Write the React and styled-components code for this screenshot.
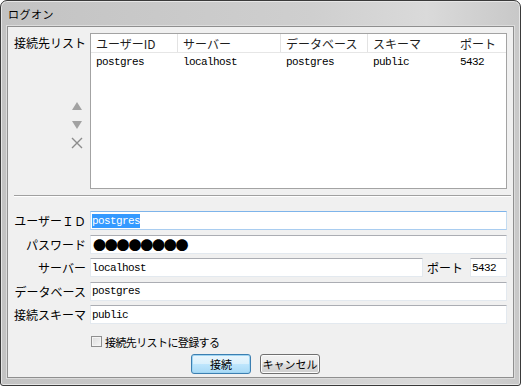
import React from "react";
import styled, { createGlobalStyle } from "styled-components";

const Global = createGlobalStyle`
    body {
        margin : 0;
        background : #ffffff;
        font-family : "Noto Sans CJK JP", sans-serif;
        font-size : 12px;
        color : #000;
    }
`

const Window = styled.div`
    width : 521px;
    height : 386px;
    box-sizing : border-box;
    border : 1px solid #3a3a3a;
    border-radius : 7px 7px 3px 3px;
    background : linear-gradient(90deg, #c3c3c3 0%, #cfcfcf 60%, #dadada 82%, #c8c8c8 100%);
    display : flex;
    flex-direction : column;
    box-shadow : inset 0 0 0 1px #e6e6e6;
`

const TitleBar = styled.div`
    height : 25px;
    flex : none;
    display : flex;
    align-items : center;
    padding-left : 7px;
    font-size : 11px;
    letter-spacing : 0.5px;
`

const Frame = styled.div`
    flex : 1;
    padding : 0 6px 7px 6px;
    display : flex;
`

const Client = styled.div`
    flex : 1;
    border : 1px solid #8f8f8f;
    outline : 1px solid #dcdcdc;
    background : #f0f0f0;
    display : flex;
    flex-direction : column;
    padding-top : 6px;
`

const ListSection = styled.div`
    display : flex;
    height : 156px;
    padding : 0 6px;
`

const SideColumn = styled.div`
    width : 76px;
    flex : none;
    display : flex;
    flex-direction : column;
    align-items : flex-start;
`

const SideLabel = styled.div`
    padding-top : 2px;
    line-height : 16px;
`

const SideButtons = styled.div`
    align-self : flex-end;
    margin : 46px 3px 0 0;
    display : flex;
    flex-direction : column;
    align-items : center;
    width : 20px;
`

const SideButton = styled.div`
    height : 18.5px;
    display : flex;
    align-items : center;
    justify-content : center;
`

const Table = styled.div`
    flex : 1;
    border : 1px solid #a3a3a3;
    background : #fff;
`

const Row = styled.div`
    display : flex;
    height : 18px;
    border-bottom : ${props => props.header ? "1px solid #e6e6e6" : "none"};
`

const Cell = styled.div`
    width : ${props => props.w ? props.w + "px" : "auto"};
    flex : ${props => props.w ? "none" : "1"};
    padding-left : 5px;
    box-sizing : border-box;
    display : flex;
    align-items : center;
    border-right : ${props => props.header && props.divider ? "1px solid #e3e3e3" : "none"};
    color : ${props => props.header ? "#1e1e1e" : "#000"};
`

const Mono = styled.span`
    font-family : "Liberation Mono", "DejaVu Sans Mono", monospace;
    font-size : 11px;
    letter-spacing : -0.6px;
`

const Separator = styled.div`
    margin : 6px 2px 0 6px;
    border-top : 1px solid #a0a0a0;
    border-bottom : 1px solid #ffffff;
`

const Form = styled.div`
    margin-top : 14px;
    padding : 0 6px;
    display : flex;
    flex-direction : column;
    gap : 4.5px;
`

const FormRow = styled.div`
    display : flex;
    align-items : center;
    height : 19px;
`

const Label = styled.div`
    width : 72px;
    margin-right : 4px;
    text-align : right;
    flex : none;
    white-space : nowrap;
`

const Input = styled.div`
    flex : ${props => props.w ? "none" : "1"};
    width : ${props => props.w ? props.w + "px" : "auto"};
    height : 19px;
    box-sizing : border-box;
    background : #fff;
    border : 1px solid ${props => props.focus ? "#c5dcf0" : "#e3e9ef"};
    border-top-color : ${props => props.focus ? "#7eb4ea" : "#abadb3"};
    border-bottom-color : ${props => props.focus ? "#a9cdf0" : "#e3e9ef"};
    padding-left : 1px;
    display : flex;
    align-items : center;
    overflow : hidden;
    white-space : nowrap;
`

const Selected = styled.span`
    background : #3399ff;
    color : #fff;
    padding : 1px 0;
`

const Dots = styled.span`
    font-size : 13px;
    letter-spacing : -1.2px;
    margin-left : 1px;
`

const PortLabel = styled.div`
    margin : 0 7px 0 4px;
    white-space : nowrap;
`

const CheckRow = styled.label`
    margin : 11px 0 0 83px;
    display : flex;
    align-items : center;
    gap : 3px;
    font-size : 11px;
    letter-spacing : -0.6px;
    height : 13px;
`

const CheckBox = styled.span`
    width : 11px;
    height : 11px;
    box-sizing : border-box;
    border : 1px solid #8f8f8f;
    background : linear-gradient(135deg, #dcdcdc, #f6f6f6);
    box-shadow : inset 0 0 0 1px #f4f4f4;
`

const ButtonRow = styled.div`
    margin : 6px 0 0 183px;
    display : flex;
    gap : 9px;
`

const Button = styled.button`
    width : ${props => props.w}px;
    height : 20px;
    box-sizing : border-box;
    font-family : "Noto Sans CJK JP", sans-serif;
    font-size : 11px;
    color : #000;
    padding : 0;
    border-radius : 3px;
    border : 1px solid ${props => props.primary ? "#3c7fb1" : "#707070"};
    background : ${props => props.primary
        ? "linear-gradient(#eaf6fd 0%, #d9f0fc 50%, #bee6fd 51%, #a7d9f5 100%)"
        : "linear-gradient(#f2f2f2 0%, #ebebeb 50%, #dddddd 51%, #cfcfcf 100%)"};
    box-shadow : inset 0 0 0 1px ${props => props.primary ? "#9fd5f3" : "#fcfcfc"};
`

const columns = [
    { title : "ユーザーID", w : 87, value : "postgres" },
    { title : "サーバー", w : 103, value : "localhost" },
    { title : "データベース", w : 87, value : "postgres" },
    { title : "スキーマ", w : 87, value : "public" },
    { title : "ポート", value : "5432" },
]

const Up = () => (
    <svg width="10" height="8" viewBox="0 0 10 8"><polygon points="5,0 10,8 0,8" fill="#a2a2a2" /></svg>
)
const Down = () => (
    <svg width="10" height="8" viewBox="0 0 10 8"><polygon points="0,0 10,0 5,8" fill="#a2a2a2" /></svg>
)
const Cross = () => (
    <svg width="12" height="12" viewBox="0 0 12 12">
        <path d="M1 1 L11 11 M11 1 L1 11" stroke="#8c8c8c" strokeWidth="1.4" fill="none" />
    </svg>
)

const App = () => {
    return (
        <>
            <Global />
            <Window>
                <TitleBar>ログオン</TitleBar>
                <Frame>
                    <Client>
                        <ListSection>
                            <SideColumn>
                                <SideLabel>接続先リスト</SideLabel>
                                <SideButtons>
                                    <SideButton><Up /></SideButton>
                                    <SideButton><Down /></SideButton>
                                    <SideButton><Cross /></SideButton>
                                </SideButtons>
                            </SideColumn>
                            <Table>
                                <Row header>
                                    {columns.map((c, i) => (
                                        <Cell key={c.title} w={c.w} header divider={i < 3}>{c.title}</Cell>
                                    ))}
                                </Row>
                                <Row>
                                    {columns.map(c => (
                                        <Cell key={c.title} w={c.w}><Mono>{c.value}</Mono></Cell>
                                    ))}
                                </Row>
                            </Table>
                        </ListSection>
                        <Separator />
                        <Form>
                            <FormRow>
                                <Label>ユーザーＩＤ</Label>
                                <Input focus><Mono><Selected>postgres</Selected></Mono></Input>
                            </FormRow>
                            <FormRow>
                                <Label>パスワード</Label>
                                <Input><Dots>●●●●●●●●</Dots></Input>
                            </FormRow>
                            <FormRow>
                                <Label>サーバー</Label>
                                <Input><Mono>localhost</Mono></Input>
                                <PortLabel>ポート</PortLabel>
                                <Input w={37}><Mono>5432</Mono></Input>
                            </FormRow>
                            <FormRow>
                                <Label>データベース</Label>
                                <Input><Mono>postgres</Mono></Input>
                            </FormRow>
                            <FormRow>
                                <Label>接続スキーマ</Label>
                                <Input><Mono>public</Mono></Input>
                            </FormRow>
                        </Form>
                        <CheckRow>
                            <CheckBox />
                            接続先リストに登録する
                        </CheckRow>
                        <ButtonRow>
                            <Button primary w={60}>接続</Button>
                            <Button w={60}>キャンセル</Button>
                        </ButtonRow>
                    </Client>
                </Frame>
            </Window>
        </>
    )
}
export default App;
